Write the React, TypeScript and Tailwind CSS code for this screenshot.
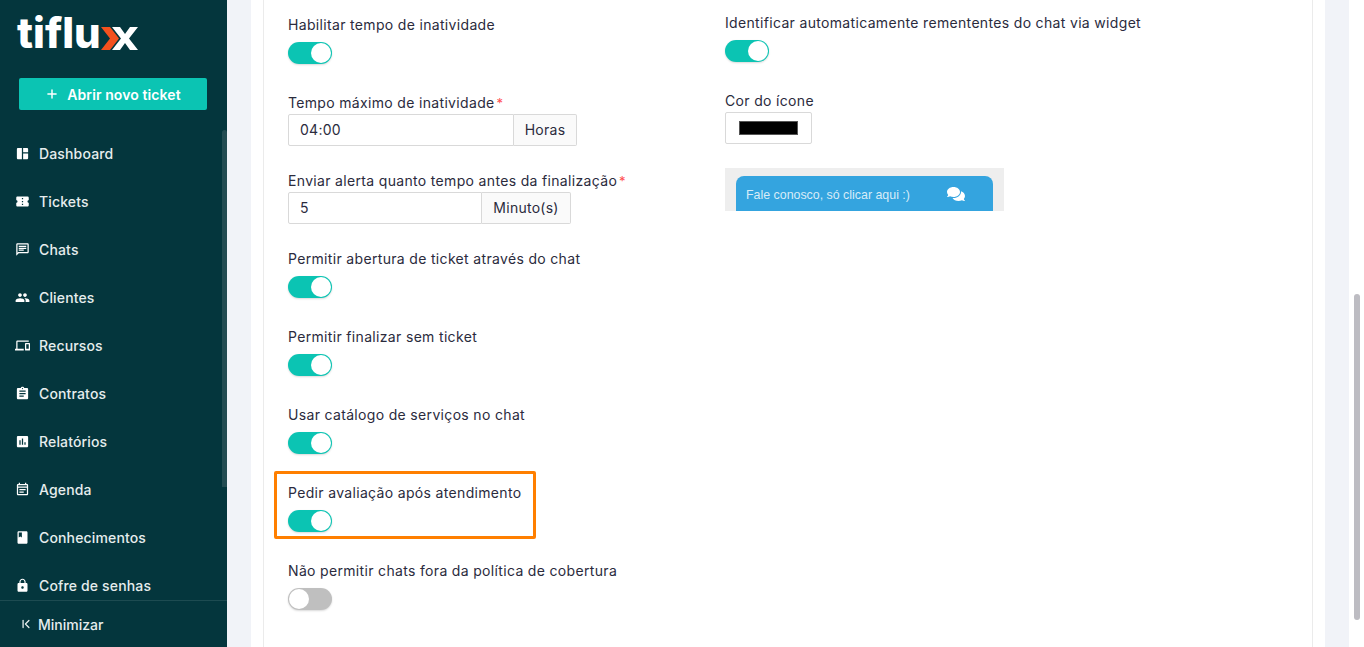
import { ChevronFirst, Plus } from "lucide-react";
import { FaComments } from "react-icons/fa";
import {
  MdAssessment,
  MdAssignment,
  MdBook,
  MdConfirmationNumber,
  MdLock,
  MdOutlineChat,
  MdOutlineDevices,
  MdOutlineEventNote,
  MdPeople,
  MdSpaceDashboard,
} from "react-icons/md";

const menu = [
  { label: "Dashboard", icon: MdSpaceDashboard },
  { label: "Tickets", icon: MdConfirmationNumber },
  { label: "Chats", icon: MdOutlineChat },
  { label: "Clientes", icon: MdPeople },
  { label: "Recursos", icon: MdOutlineDevices },
  { label: "Contratos", icon: MdAssignment },
  { label: "Relatórios", icon: MdAssessment },
  { label: "Agenda", icon: MdOutlineEventNote },
  { label: "Conhecimentos", icon: MdBook },
  { label: "Cofre de senhas", icon: MdLock },
];

function Toggle({ on = true }: { on?: boolean }) {
  return on ? (
    <div className="flex h-[22px] w-11 items-center justify-end rounded-full bg-[#0bc4b3] pr-[1px] shadow-[0_1px_2px_rgba(0,0,0,0.15)]">
      <div className="h-5 w-5 rounded-full bg-white" />
    </div>
  ) : (
    <div className="flex h-[22px] w-11 items-center rounded-full bg-[#bfbfbf] pl-[1px] shadow-[0_1px_2px_rgba(0,0,0,0.15)]">
      <div className="h-5 w-5 rounded-full bg-white" />
    </div>
  );
}

function Label({ text, required }: { text: string; required?: boolean }) {
  return (
    <div className="flex h-5 items-center text-[14px] leading-5 tracking-[0.33px] text-[#2b2b3d]">
      {text}
      {required && <span className="ml-[2px] text-[13px] text-[#ff4d4f]">*</span>}
    </div>
  );
}

function ToggleField({ text, on }: { text: string; on?: boolean }) {
  return (
    <div className="flex flex-col gap-[7px]">
      <Label text={text} />
      <Toggle on={on} />
    </div>
  );
}

function AddonField({
  text,
  value,
  addon,
  inputW,
  addonW,
}: {
  text: string;
  value: string;
  addon: string;
  inputW: string;
  addonW: string;
}) {
  return (
    <div className="flex flex-col gap-[1px]">
      <Label text={text} required />
      <div className="flex h-8 text-[14px] tracking-[0.25px] text-[#2b2b3d]">
        <div className={`flex items-center rounded-l-[2px] border border-[#d9d9d9] bg-white px-[11px] pb-[1px] ${inputW}`}>{value}</div>
        <div className={`flex items-center justify-center rounded-r-[2px] border border-l-0 border-[#d9d9d9] bg-[#fafafa] pb-[1px] ${addonW}`}>{addon}</div>
      </div>
    </div>
  );
}

export default function App() {
  return (
    <div className="flex h-[647px] w-[1364px] overflow-hidden bg-white font-['Inter',sans-serif]">
      {/* Sidebar */}
      <aside className="flex w-[227px] shrink-0 flex-col bg-[#04363d] text-[#e6eded]">
        <div className="flex h-[78px] items-start pl-[17px] pt-[8px]">
          <span className="text-[42px] font-extrabold leading-[50px] text-white">tiflu</span>
          <svg width="37" height="23" viewBox="0 0 37 23" className="mt-[19px] shrink-0">
            <path d="M11 0H19L24 7L29 0H37L28 11.5L37 23H29L24 16L19 23H11L20 11.5Z" fill="#fff" />
            <path d="M0 0H9L18 11.5L9 23H0L9 11.5Z" fill="#f4511e" />
          </svg>
        </div>
        <div className="pl-[19px] pr-[20px]">
          <div className="flex h-8 items-center justify-center gap-2 rounded-[2px] bg-[#0bc4b3] text-[14px] font-semibold tracking-[0.1px] text-white">
            <Plus size={14} strokeWidth={2.5} />
            Abrir novo ticket
          </div>
        </div>
        <div className="relative min-h-0 flex-1 overflow-hidden">
          <nav className="flex flex-col pt-[19px]">
            {menu.map((m) => (
              <div key={m.label} className="flex h-12 shrink-0 items-center gap-[9px] pl-[15px] text-[14px] font-medium tracking-[0.15px]">
                <m.icon size={15} className="text-white" />
                {m.label}
              </div>
            ))}
          </nav>
          <div className="absolute right-0 top-[20px] h-[357px] w-[5px] rounded-t-[3px] bg-[#234c52]" />
        </div>
        <div className="flex h-[47px] shrink-0 items-center gap-[5px] border-t border-[#1d4b51] pl-[19px] text-[14px] font-medium">
          <ChevronFirst size={14} strokeWidth={2.2} />
          Minimizar
        </div>
      </aside>

      {/* Content */}
      <main className="flex min-w-0 flex-1 bg-[#f1f3f8] pl-6">
        <div className="w-[1074px] bg-white px-3">
          <div className="flex h-full border-x border-[#ebebeb]">
            <div className="flex w-[461px] flex-col pl-6 pt-[15px]">
              <ToggleField text="Habilitar tempo de inatividade" />
              <div className="mt-[29px]">
                <AddonField text="Tempo máximo de inatividade" value="04:00" addon="Horas" inputW="w-[226px]" addonW="w-[63px]" />
              </div>
              <div className="mt-[25px]">
                <AddonField text="Enviar alerta quanto tempo antes da finalização" value="5" addon="Minuto(s)" inputW="w-[194px]" addonW="w-[89px]" />
              </div>
              <div className="mt-[25px]">
                <ToggleField text="Permitir abertura de ticket através do chat" />
              </div>
              <div className="mt-[29px]">
                <ToggleField text="Permitir finalizar sem ticket" />
              </div>
              <div className="mt-[29px]">
                <ToggleField text="Usar catálogo de serviços no chat" />
              </div>
              <div className="relative mt-[29px]">
                <ToggleField text="Pedir avaliação após atendimento" />
                <div className="absolute -left-[14px] -top-[12px] h-[68px] w-[262px] rounded-[2px] border-[3px] border-[#ff7f00]" />
              </div>
              <div className="mt-[29px]">
                <ToggleField text="Não permitir chats fora da política de cobertura" on={false} />
              </div>
            </div>
            <div className="flex flex-col pt-[13px]">
              <ToggleField text="Identificar automaticamente remententes do chat via widget" />
              <div className="mt-[29px] flex flex-col gap-[1px]">
                <Label text="Cor do ícone" />
                <div className="flex h-8 w-[87px] items-center justify-center rounded-[2px] border border-[#d9d9d9] bg-white">
                  <div className="h-[14px] w-[59px] border border-[#555] bg-black" />
                </div>
              </div>
              <div className="mt-6 h-[43px] w-[279px] overflow-hidden bg-[#eeeeee] pl-[11px] pt-2">
                <div className="flex h-[40px] w-[257px] items-start justify-between rounded-t-[8px] bg-[#34a4df] pl-[10px] pr-[28px] pt-[9px] font-['Liberation_Sans',sans-serif] text-[12.4px] leading-[14px] text-[#d8ecf8]">
                  <span className="mt-[3px]">Fale conosco, só clicar aqui :)</span>
                  <FaComments size={18} className="text-white" />
                </div>
              </div>
            </div>
          </div>
        </div>
        <div className="w-6" />
        <div className="relative w-[15px] shrink-0 bg-white">
          <div className="absolute left-[5px] top-[294px] h-[326px] w-[6px] rounded-[3px] bg-[#bdbcc2]" />
        </div>
      </main>
    </div>
  );
}
